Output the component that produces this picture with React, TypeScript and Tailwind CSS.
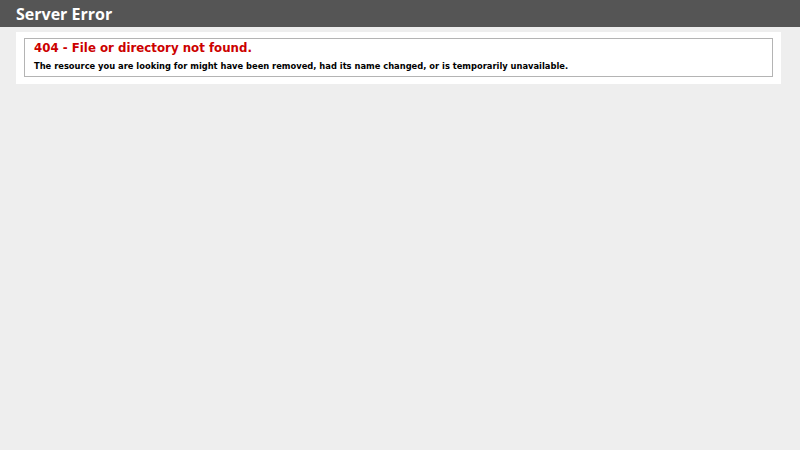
import React from 'react';

const App = () => {
  return (
    <div className="min-h-[450px] w-full bg-[#eeeeee]" style={{ fontFamily: '"DejaVu Sans", Verdana, sans-serif' }}>
      <div className="h-[27px] bg-[#555555] px-4 flex items-center">
        <h1 className="text-[16px] leading-none font-bold text-white" style={{ fontFamily: '"Open Sans", "Liberation Sans", sans-serif' }}>
          Server Error
        </h1>
      </div>
      <div className="ml-4 mt-[5px] w-[765px] bg-white pt-[6px] pb-[7px] px-2">
        <div className="border border-[#b4b4b4] h-[39px] pl-[9px] pt-[1px]">
          <h2 className="text-[11.8px] leading-[16px] font-bold text-[#cc0000]">404 - File or directory not found.</h2>
          <h3 className="mt-[4px] text-[8.33px] leading-[12px] font-bold text-black">
            The resource you are looking for might have been removed, had its name changed, or is temporarily unavailable.
          </h3>
        </div>
      </div>
    </div>
  );
};

export default App;
